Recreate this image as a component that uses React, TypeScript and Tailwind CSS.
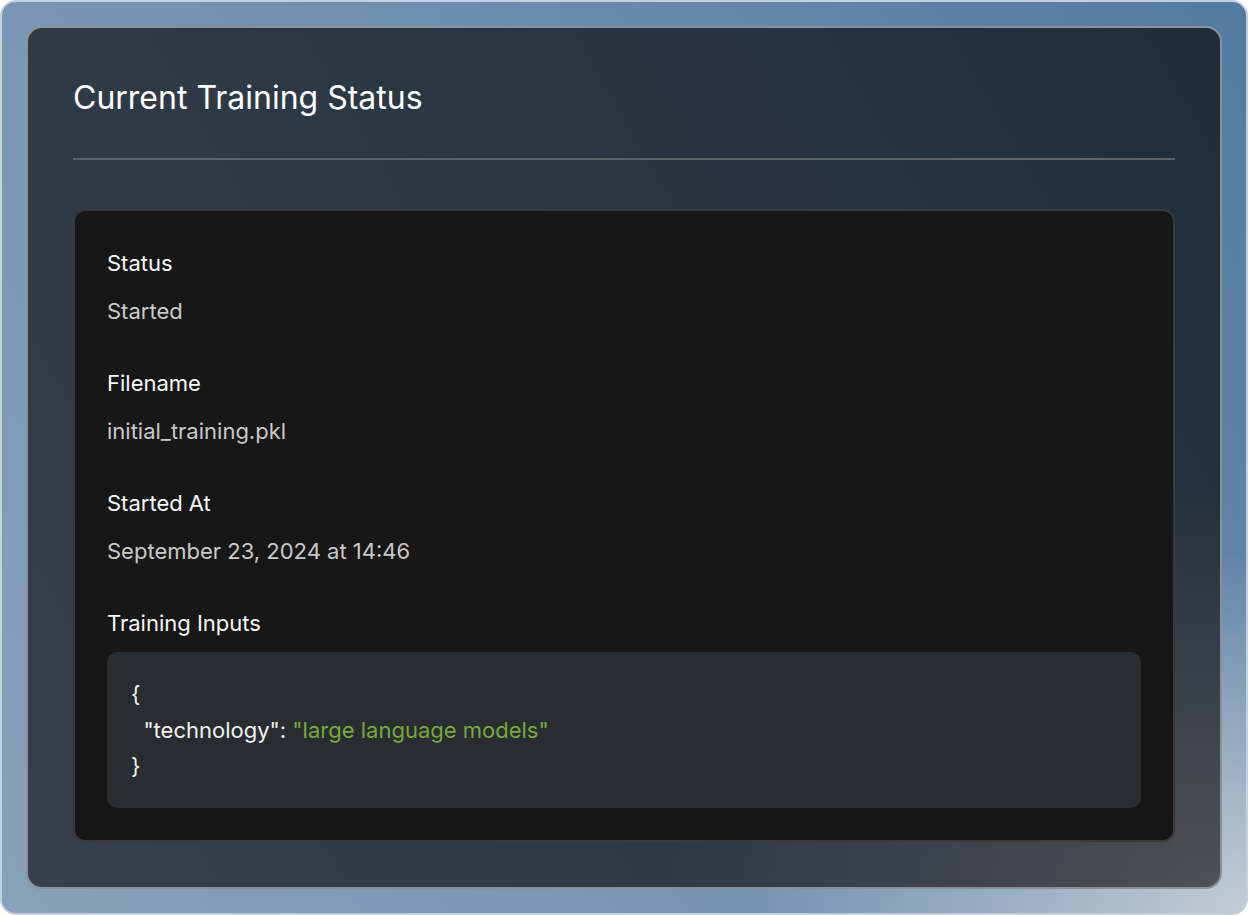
const fields = [
  { label: "Status", value: "Started" },
  { label: "Filename", value: "initial_training.pkl" },
  { label: "Started At", value: "September 23, 2024 at 14:46" },
];

const App = () => {
  return (
    <div className="h-[915px] w-full bg-white font-['Inter',sans-serif]">
      <div className="h-full rounded-2xl border-2 border-[#c3d0dd] bg-[radial-gradient(ellipse_at_100%_100%,rgba(200,208,216,0.95),transparent_28%),linear-gradient(235deg,#537aa0_0%,#6f8fb0_45%,#89a1ba_100%)] p-6">
        <div className="rounded-2xl border-2 border-[#8b9096] bg-[radial-gradient(ellipse_at_100%_100%,rgba(88,88,90,0.8),transparent_33%),linear-gradient(240deg,#1f2d3a_0%,#2c3744_50%,#363f4b_100%)] p-[45px]">
          <h2 className="text-[32px] leading-[50px] text-white">
            Current Training Status
          </h2>
          <div className="mt-[35px] h-[2px] bg-[#5b636c]" />
          <div className="mt-[49px] rounded-xl border-2 border-[#3a3a3a] bg-[#171717] px-8 pt-[38px] pb-8">
            {fields.map((f) => (
              <div key={f.label} className="mb-11">
                <p className="text-[22px] leading-7 text-[#f7f7f7]">{f.label}</p>
                <p className="mt-5 text-[22px] leading-7 text-[#c9c9c9]">
                  {f.value}
                </p>
              </div>
            ))}
            <p className="text-[22px] leading-7 text-[#f7f7f7]">Training Inputs</p>
            <pre className="mt-[15px] rounded-[10px] bg-[#292d31] p-6 font-['Inter',sans-serif] text-[22px] leading-9 text-[#f2f2f2]">
              {"{\n"}
              {'  "technology": '}
              <span className="text-[#78a83d]">"large language models"</span>
              {"\n}"}
            </pre>
          </div>
        </div>
      </div>
    </div>
  );
};

export default App;
